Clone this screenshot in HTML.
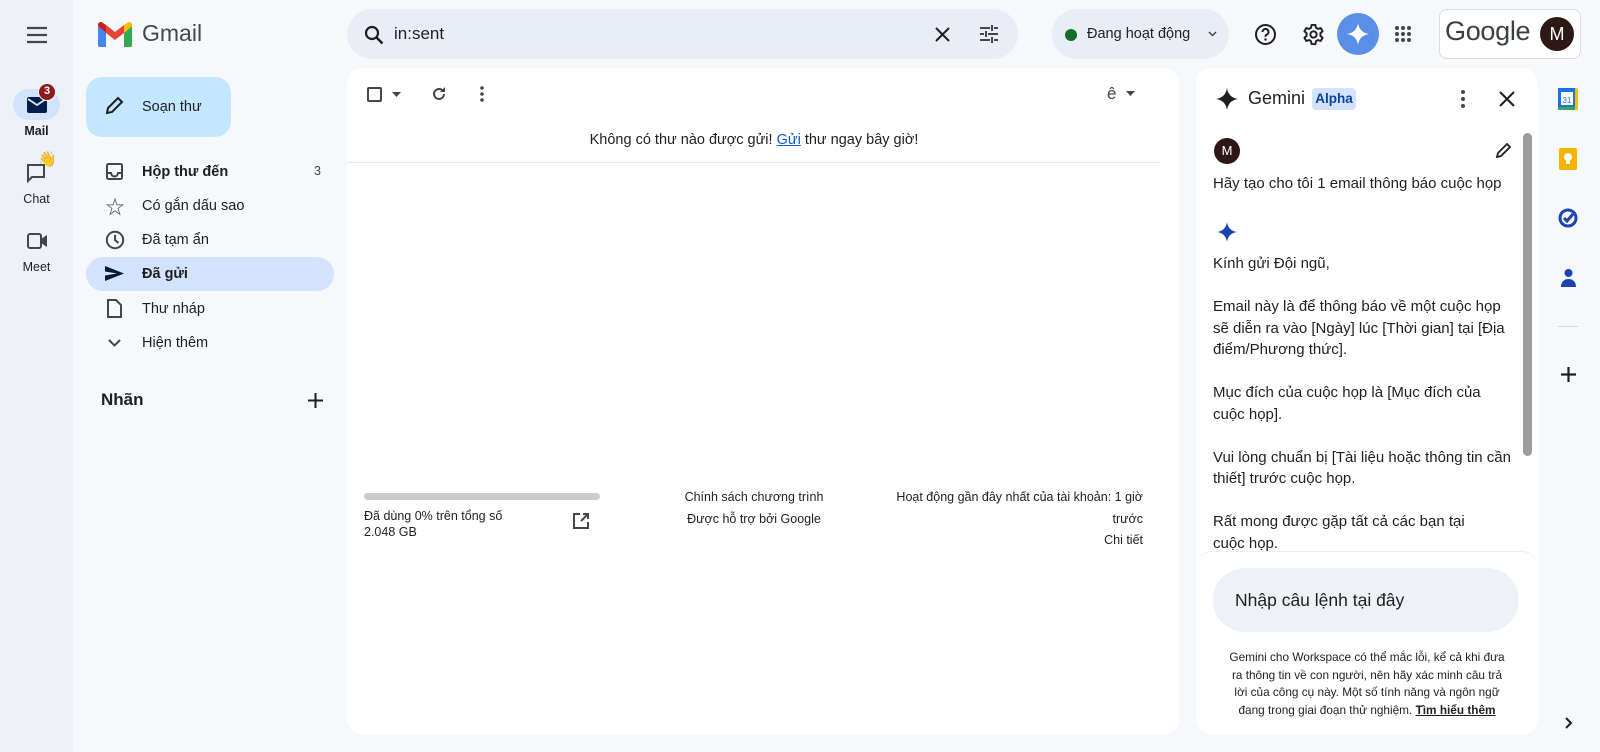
<!DOCTYPE html>
<html><head><meta charset="utf-8"><style>
*{box-sizing:border-box;margin:0;padding:0}
body{width:1600px;height:752px;overflow:hidden;background:#f6f8fc;font-family:"Liberation Sans","Noto Sans CJK SC",sans-serif;color:#1f1f1f;position:relative}
.a{position:absolute}
.rail{left:0;top:0;width:73px;height:752px;background:#eef2f8}
.lbl{font-size:12.5px;width:73px;text-align:center;left:0}
.nav{left:142px;font-size:14.5px;transform:translateY(-50%)}
.ico{transform:translate(-50%,-50%)}
.panel{background:#fff;border-radius:16px}
.gt{left:1213px;font-size:15px;line-height:21.5px;white-space:nowrap}
</style></head><body>
<div class="a rail"></div>
<svg class="a" style="left:26px;top:26px" width="22" height="18"><path d="M1 2h20M1 9h20M1 16h20" stroke="#444746" stroke-width="2.2"/></svg>
<div class="a" style="left:13px;top:89px;width:47px;height:31px;border-radius:16px;background:#d3e3fd"></div>
<svg class="a" style="left:27px;top:97px" width="20" height="16"><rect x="0" y="0" width="20" height="16" rx="2" fill="#041e49"/><path d="M1 2l9 6 9-6" stroke="#d3e3fd" stroke-width="1.8" fill="none"/></svg>
<div class="a" style="left:38px;top:83px;width:18px;height:18px;border-radius:50%;background:#8c1d18;color:#fff;font-size:11px;font-weight:bold;text-align:center;line-height:15px;border:1.5px solid #eef2f8">3</div>
<div class="a lbl" style="top:124px;font-weight:bold">Mail</div>
<svg class="a" style="left:26px;top:163px" width="22" height="20"><path d="M2 2h16v12H6l-4 4z" stroke="#444746" stroke-width="2" fill="none"/></svg>
<div class="a" style="left:38px;top:150px;font-size:15px">👋</div>
<div class="a lbl" style="top:192px">Chat</div>
<svg class="a" style="left:27px;top:233px" width="22" height="16"><rect x="1" y="1" width="13" height="14" rx="2" stroke="#444746" stroke-width="2" fill="none"/><path d="M14 6l6-4v12l-6-4z" fill="#444746"/></svg>
<div class="a lbl" style="top:260px">Meet</div>

<svg class="a" style="left:98px;top:22px" width="34" height="25" viewBox="0 0 34 25"><path d="M0 4v19a2 2 0 0 0 2 2h6V11z" fill="#4285f4"/><path d="M26 25h6a2 2 0 0 0 2-2V4l-8 7z" fill="#34a853"/><path d="M26 3v8l8-7V3c0-3-3-4-5-2z" fill="#fbbc04"/><path d="M8 11V3l9 7 9-7v8l-9 7z" fill="#ea4335"/><path d="M0 4v0l8 7V3L5 1C3-1 0 0 0 3z" fill="#c5221f"/></svg>
<div class="a" style="left:142px;top:20px;font-size:23px;color:#444746">Gmail</div>

<div class="a" style="left:86px;top:77px;width:145px;height:60px;border-radius:16px;background:#c2e7ff"></div>
<svg class="a" style="left:104px;top:96px" width="20" height="20"><path d="M3 17l1-5L14 2l4 4L8 16z" stroke="#1f1f1f" stroke-width="2" fill="none"/></svg>
<div class="a" style="left:142px;top:99px;font-size:14.5px;font-weight:500">Soạn thư</div>

<div class="a" style="left:86px;top:257px;width:248px;height:34px;border-radius:17px;background:#d3e3fd"></div>
<svg class="a" style="left:106px;top:163px" width="17" height="17"><rect x="1" y="1" width="15" height="15" rx="1.5" stroke="#444746" stroke-width="2" fill="none"/><path d="M1 10h4a3.5 3.5 0 0 0 7 0h4" stroke="#444746" stroke-width="2" fill="none"/></svg>
<div class="a nav" style="top:172px;font-weight:bold">Hộp thư đến</div>
<div class="a" style="left:314px;top:164px;font-size:12.5px;color:#444746">3</div>
<div class="a ico" style="left:115px;top:206px;font-size:19px;color:#444746">☆</div>
<div class="a nav" style="top:206px">Có gắn dấu sao</div>
<svg class="a" style="left:105px;top:230px" width="20" height="20"><circle cx="10" cy="10" r="8.2" stroke="#444746" stroke-width="2" fill="none"/><path d="M10 5v5l3.5 3" stroke="#444746" stroke-width="2" fill="none"/></svg>
<div class="a nav" style="top:240px">Đã tạm ẩn</div>
<svg class="a" style="left:105px;top:266px" width="19" height="15"><path d="M0 0l19 7.5L0 15l0-5.5 12-2L0 5.5z" fill="#001d35"/></svg>
<div class="a nav" style="top:274px;font-weight:bold">Đã gửi</div>
<svg class="a" style="left:107px;top:299px" width="15" height="19"><path d="M1 1h8l5 5v12H1z" stroke="#444746" stroke-width="2" fill="none"/></svg>
<div class="a nav" style="top:309px">Thư nháp</div>
<svg class="a" style="left:108px;top:339px" width="13" height="8"><path d="M1 1l5.5 5.5L12 1" stroke="#444746" stroke-width="2" fill="none"/></svg>
<div class="a nav" style="top:343px">Hiện thêm</div>
<div class="a" style="left:101px;top:390px;font-size:17px;font-weight:bold;color:#1f1f1f">Nhãn</div>
<svg class="a" style="left:308px;top:393px" width="15" height="15"><path d="M7.5 0v15M0 7.5h15" stroke="#1f1f1f" stroke-width="2"/></svg>

<div class="a" style="left:347px;top:9px;width:671px;height:50px;border-radius:25px;background:#e9eef6"></div>
<svg class="a" style="left:364px;top:25px" width="20" height="20"><circle cx="8" cy="8" r="6" stroke="#1f1f1f" stroke-width="2.2" fill="none"/><path d="M12.5 12.5l6 6" stroke="#1f1f1f" stroke-width="2.4"/></svg>
<div class="a" style="left:394px;top:24px;font-size:17px">in:sent</div>
<svg class="a" style="left:935px;top:27px" width="15" height="15"><path d="M1 1l13 13M14 1L1 14" stroke="#1f1f1f" stroke-width="2"/></svg>
<svg class="a" style="left:979px;top:24px" width="20" height="20"><path d="M1 4h10M15 4h4M1 10h4M9 10h10M1 16h10M15 16h4M13 1v6M7 7v6M13 13v6" stroke="#444746" stroke-width="2"/></svg>

<div class="a" style="left:1052px;top:9px;width:177px;height:50px;border-radius:25px;background:#e9eef6"></div>
<div class="a" style="left:1065px;top:29px;width:12px;height:12px;border-radius:50%;background:#146c2e"></div>
<div class="a" style="left:1087px;top:26px;font-size:14.5px;font-weight:500">Đang hoạt động</div>
<svg class="a" style="left:1208px;top:31px" width="9" height="6"><path d="M1 1l3.5 3.5L8 1" stroke="#444746" stroke-width="1.5" fill="none"/></svg>

<svg class="a" style="left:1254px;top:23px" width="23" height="23"><circle cx="11.5" cy="11.5" r="9.5" stroke="#1f1f1f" stroke-width="2" fill="none"/><path d="M8.5 9a3 3 0 1 1 4 2.8c-.8.4-1 1-1 2" stroke="#1f1f1f" stroke-width="2" fill="none"/><circle cx="11.5" cy="16.5" r="1.2" fill="#1f1f1f"/></svg>
<svg class="a" style="left:1302px;top:23px" width="23" height="23" viewBox="0 0 24 24"><path d="M10 2h4l.6 3 2 1.2 2.9-1 2 3.4-2.3 2v2.8l2.3 2-2 3.4-2.9-1-2 1.2L14 22h-4l-.6-3-2-1.2-2.9 1-2-3.4 2.3-2v-2.8l-2.3-2 2-3.4 2.9 1 2-1.2z" stroke="#1f1f1f" stroke-width="2" fill="none" stroke-linejoin="round"/><circle cx="12" cy="12" r="3.3" stroke="#1f1f1f" stroke-width="2" fill="none"/></svg>
<div class="a" style="left:1337px;top:13px;width:42px;height:42px;border-radius:50%;background:#5b8ee6"></div>
<svg class="a" style="left:1347px;top:23px" width="22" height="22" viewBox="0 0 24 24"><path d="M12 0C13 7 17 11 24 12 17 13 13 17 12 24 11 17 7 13 0 12 7 11 11 7 12 0z" fill="#fff"/></svg>
<svg class="a" style="left:1394px;top:25px" width="18" height="18"><g fill="#444746"><circle cx="3" cy="3" r="2"/><circle cx="9" cy="3" r="2"/><circle cx="15" cy="3" r="2"/><circle cx="3" cy="9" r="2"/><circle cx="9" cy="9" r="2"/><circle cx="15" cy="9" r="2"/><circle cx="3" cy="15" r="2"/><circle cx="9" cy="15" r="2"/><circle cx="15" cy="15" r="2"/></g></svg>
<div class="a" style="left:1439px;top:9px;width:142px;height:50px;border-radius:8px;background:#fff;border:1px solid #dadce0"></div>
<div class="a" style="left:1445px;top:16px;font-size:27px;color:#3c4043;letter-spacing:-0.3px">Google</div>
<div class="a" style="left:1540px;top:17px;width:34px;height:34px;border-radius:50%;background:#2d1813;color:#fff;font-size:18px;text-align:center;line-height:34px">M</div>

<div class="a panel" style="left:347px;top:68px;width:832px;height:667px"></div>
<div class="a" style="left:367px;top:87px;width:15px;height:15px;border:2px solid #444746;border-radius:2px"></div>
<svg class="a" style="left:392px;top:92px" width="9" height="5"><path d="M0 0h9L4.5 5z" fill="#444746"/></svg>
<svg class="a" style="left:431px;top:86px" width="16" height="16" viewBox="0 0 16 16"><path d="M13 8a5 5 0 1 1-1.5-3.6" stroke="#444746" stroke-width="2" fill="none"/><path d="M14 1v5H9z" fill="#444746"/></svg>
<svg class="a" style="left:480px;top:86px" width="4" height="16"><g fill="#444746"><circle cx="2" cy="2" r="1.8"/><circle cx="2" cy="8" r="1.8"/><circle cx="2" cy="14" r="1.8"/></g></svg>
<div class="a" style="left:1107px;top:84px;font-size:17px;color:#444746">ê</div>
<svg class="a" style="left:1126px;top:91px" width="9" height="5"><path d="M0 0h9L4.5 5z" fill="#444746"/></svg>
<div class="a" style="left:347px;top:132px;width:814px;text-align:center;font-size:14.5px;color:#1f1f1f">Không có thư nào được gửi! <span style="color:#0b57d0;text-decoration:underline">Gửi</span> thư ngay bây giờ!</div>
<div class="a" style="left:347px;top:162px;width:814px;height:1px;background:#e6e8ec"></div>
<div class="a" style="left:364px;top:493px;width:236px;height:7px;border-radius:4px;background:#c9cbcf"></div>
<div class="a" style="left:364px;top:508px;font-size:12.5px;line-height:16px;color:#1f1f1f">Đã dùng 0% trên tổng số<br>2.048 GB</div>
<svg class="a" style="left:573px;top:513px" width="16" height="16"><path d="M7 1H1v14h14V9" stroke="#444746" stroke-width="2" fill="none"/><path d="M8 8l7-7M10 1h5v5" stroke="#444746" stroke-width="2" fill="none"/></svg>
<div class="a" style="left:654px;top:487px;width:200px;text-align:center;font-size:12.5px;line-height:21.5px">Chính sách chương trình<br>Được hỗ trợ bởi Google</div>
<div class="a" style="left:853px;top:487px;width:290px;text-align:right;font-size:12.5px;line-height:21.5px">Hoạt động gần đây nhất của tài khoản: 1 giờ<br>trước<br>Chi tiết</div>

<div class="a panel" style="left:1196px;top:68px;width:342px;height:667px"></div>
<svg class="a" style="left:1216px;top:88px" width="22" height="22" viewBox="0 0 24 24"><path d="M12 0C13 7 17 11 24 12 17 13 13 17 12 24 11 17 7 13 0 12 7 11 11 7 12 0z" fill="#1f1f1f"/></svg>
<div class="a" style="left:1248px;top:88px;font-size:18px">Gemini</div>
<div class="a" style="left:1312px;top:88px;width:44px;height:22px;border-radius:4px;background:#d3e3fd;color:#0842a0;font-size:13.5px;font-weight:bold;text-align:center;line-height:22px">Alpha</div>
<svg class="a" style="left:1461px;top:90px" width="4" height="18"><g fill="#444746"><circle cx="2" cy="2" r="2"/><circle cx="2" cy="9" r="2"/><circle cx="2" cy="16" r="2"/></g></svg>
<svg class="a" style="left:1499px;top:91px" width="16" height="16"><path d="M1 1l14 14M15 1L1 15" stroke="#1f1f1f" stroke-width="2"/></svg>
<div class="a" style="left:1523px;top:133px;width:9px;height:323px;border-radius:5px;background:#9c9c9c"></div>
<div class="a" style="left:1214px;top:138px;width:26px;height:26px;border-radius:50%;background:#2d1813;color:#fff;font-size:13px;text-align:center;line-height:26px">M</div>
<svg class="a" style="left:1495px;top:142px" width="17" height="17"><path d="M2 15l1-4L12 2l3 3-9 9z" stroke="#1f1f1f" stroke-width="1.8" fill="none"/></svg>
<div class="a gt" style="top:173px">Hãy tạo cho tôi 1 email thông báo cuộc họp</div>
<svg class="a" style="left:1217px;top:222px" width="20" height="20" viewBox="0 0 24 24"><path d="M12 0C13 7 17 11 24 12 17 13 13 17 12 24 11 17 7 13 0 12 7 11 11 7 12 0z" fill="#1a44b0"/></svg>
<div class="a gt" style="top:253px">Kính gửi Đội ngũ,<br><br>Email này là để thông báo về một cuộc họp<br>sẽ diễn ra vào [Ngày] lúc [Thời gian] tại [Địa<br>điểm/Phương thức].<br><br>Mục đích của cuộc họp là [Mục đích của<br>cuộc họp].<br><br>Vui lòng chuẩn bị [Tài liệu hoặc thông tin cần<br>thiết] trước cuộc họp.<br><br>Rất mong được gặp tất cả các bạn tại<br>cuộc họp.</div>
<div class="a" style="left:1196px;top:551px;width:342px;height:184px;background:#fff;border-radius:16px;border-top:1px solid #eceff3"></div>
<div class="a" style="left:1213px;top:568px;width:306px;height:64px;border-radius:32px;background:#eef1f6"></div>
<div class="a" style="left:1235px;top:590px;font-size:17.5px;color:#1f1f1f">Nhập câu lệnh tại đây</div>
<div class="a" style="left:1196px;top:649px;width:342px;text-align:center;font-size:11.8px;line-height:17.5px;color:#1f1f1f;white-space:nowrap">Gemini cho Workspace có thể mắc lỗi, kể cả khi đưa<br>ra thông tin về con người, nên hãy xác minh câu trả<br>lời của công cụ này. Một số tính năng và ngôn ngữ<br>đang trong giai đoạn thử nghiệm. <span style="text-decoration:underline;font-weight:bold">Tìm hiểu thêm</span></div>

<svg class="a" style="left:1558px;top:88px" width="20" height="22"><rect x="0" y="0" width="20" height="22" rx="2" fill="#fbbc04"/><rect x="0" y="0" width="17" height="19" fill="#1a73e8"/><rect x="0" y="19" width="17" height="3" fill="#34a853"/><rect x="3" y="4" width="12" height="13" fill="#fff"/><text x="9" y="15" font-size="8" text-anchor="middle" fill="#1a73e8" font-family="Liberation Sans">31</text></svg>
<svg class="a" style="left:1559px;top:148px" width="18" height="22"><rect width="18" height="22" rx="2" fill="#f4b400"/><circle cx="9" cy="9" r="4" fill="#fff"/><rect x="7" y="13" width="4" height="3" fill="#fff"/></svg>
<svg class="a" style="left:1558px;top:208px" width="20" height="20"><circle cx="10" cy="10" r="8" stroke="#1a44b0" stroke-width="3" fill="none"/><path d="M6 10l3 3 6-7" stroke="#1a44b0" stroke-width="3" fill="none"/></svg>
<svg class="a" style="left:1561px;top:268px" width="15" height="20"><circle cx="7.5" cy="5" r="4" fill="#1a44b0"/><path d="M0 19c0-5 3-8 7.5-8S15 14 15 19z" fill="#1a44b0"/></svg>
<div class="a" style="left:1558px;top:326px;width:20px;height:1px;background:#d5d9df"></div>
<svg class="a" style="left:1561px;top:367px" width="15" height="15"><path d="M7.5 0v15M0 7.5h15" stroke="#1f1f1f" stroke-width="2.2"/></svg>
<svg class="a" style="left:1565px;top:717px" width="8" height="12"><path d="M1 1l5 5-5 5" stroke="#1f1f1f" stroke-width="2" fill="none"/></svg>
</body></html>
